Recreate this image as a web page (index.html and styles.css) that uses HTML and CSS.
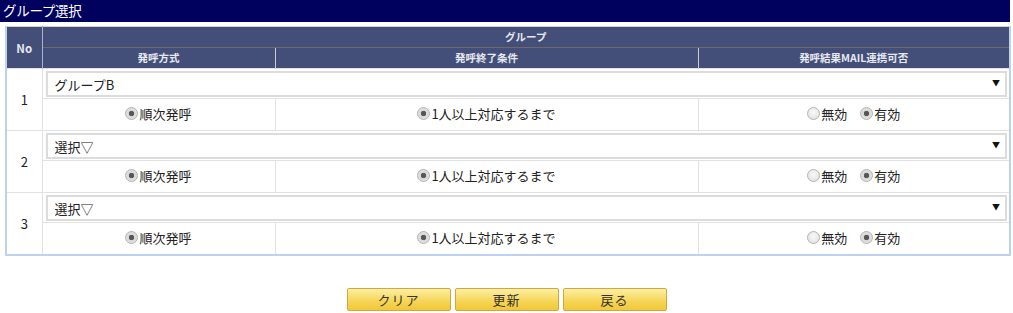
FILE: index.html
```html
<!DOCTYPE html>
<html lang="ja">
<head>
<meta charset="utf-8">
<title>グループ選択</title>
<link rel="stylesheet" href="styles.css">
</head>
<body>
<div class="title">グループ選択</div>
<table class="grid">
  <colgroup>
    <col class="c-no"><col class="c-1"><col class="c-2"><col class="c-3">
  </colgroup>
  <thead>
    <tr class="h1"><th rowspan="2" class="no-h">No</th><th colspan="3">グループ</th></tr>
    <tr class="h2"><th>発呼方式</th><th>発呼終了条件</th><th>発呼結果MAIL連携可否</th></tr>
  </thead>
  <tbody>
    <tr class="sel-row">
      <td rowspan="2" class="no">1</td>
      <td colspan="3"><span class="sel"><select><option>グループB</option></select></span></td>
    </tr>
    <tr class="radio-row">
      <td><label><input type="radio" name="m1" checked>順次発呼</label></td>
      <td><label><input type="radio" name="e1" checked>1人以上対応するまで</label></td>
      <td><label><input type="radio" name="r1">無効</label><label class="gap"><input type="radio" name="r1" checked>有効</label></td>
    </tr>
    <tr class="sel-row">
      <td rowspan="2" class="no">2</td>
      <td colspan="3"><span class="sel"><select><option>選択▽</option></select></span></td>
    </tr>
    <tr class="radio-row">
      <td><label><input type="radio" name="m2" checked>順次発呼</label></td>
      <td><label><input type="radio" name="e2" checked>1人以上対応するまで</label></td>
      <td><label><input type="radio" name="r2">無効</label><label class="gap"><input type="radio" name="r2" checked>有効</label></td>
    </tr>
    <tr class="sel-row">
      <td rowspan="2" class="no">3</td>
      <td colspan="3"><span class="sel"><select><option>選択▽</option></select></span></td>
    </tr>
    <tr class="radio-row last">
      <td><label><input type="radio" name="m3" checked>順次発呼</label></td>
      <td><label><input type="radio" name="e3" checked>1人以上対応するまで</label></td>
      <td><label><input type="radio" name="r3">無効</label><label class="gap"><input type="radio" name="r3" checked>有効</label></td>
    </tr>
  </tbody>
</table>
<div class="buttons">
  <button class="btn">クリア</button>
  <button class="btn">更新</button>
  <button class="btn">戻る</button>
</div>
</body>
</html>
```
FILE: styles.css
```css
html, body {
  margin: 0;
  padding: 0;
  background: #fff;
}
body {
  font-family: "Noto Sans CJK JP", "Noto Sans", sans-serif;
  font-size: 13px;
  line-height: 16px;
  color: #222;
  width: 1013px;
}
.title {
  width: 1010px;
  height: 22px;
  line-height: 21px;
  background: #00005e;
  color: #fff;
  font-size: 13.5px;
  padding-left: 3px;
  box-sizing: border-box;
  letter-spacing: -0.3px;
}
.grid {
  margin: 4px 0 0 5px;
  width: 1006px;
  border-collapse: collapse;
  table-layout: fixed;
  border-top: 1px solid #d6d2c8;
  border-left: 2px solid #bcd2f2;
  border-right: 2px solid #bcd2f2;
  border-bottom: 2px solid #bcd2f2;
}
.c-no { width: 36px; }
.c-1 { width: 233px; }
.c-2 { width: 423px; }
.c-3 { width: auto; }
th {
  background: #434f79;
  color: #e6e8ee;
  font-size: 10.5px;
  font-weight: bold;
  padding: 0;
  height: 20px;
  text-align: center;
}
.h1 th { border-bottom: 1px solid #6f6a66; }
.h1 th.no-h { font-size: 11.5px; border-right: 1px solid #aab0c6; border-bottom: none; }
.h2 th + th { border-left: 1px solid #c9ccd8; }
td {
  padding: 0;
  border: 1px solid #e2e2e2;
  text-align: center;
}
td.no {
  font-size: 13px;
  color: #222;
}
.sel-row td { height: 26px; }
.sel-row td[colspan] { padding: 2px 2px 1px 3px; }
.radio-row td { height: 31px; }
.sel {
  position: relative;
  display: block;
}
.sel select {
  appearance: none;
  -webkit-appearance: none;
  display: block;
  width: 100%;
  height: 26px;
  border: 2px solid #dcdcdc;
  border-radius: 0;
  background: #fff;
  font-family: inherit;
  font-size: 13px;
  color: #222;
  padding: 0 0 0 7px;
  margin: 0;
  outline: none;
}
.sel::after {
  content: "▼";
  position: absolute;
  right: 7px;
  top: 6px;
  font-size: 8px;
  line-height: 12px;
  color: #111;
  pointer-events: none;
}
label {
  display: inline-flex;
  align-items: center;
  white-space: nowrap;
}
label.gap { margin-left: 13px; }
input[type="radio"] {
  appearance: none;
  -webkit-appearance: none;
  width: 13px;
  height: 13px;
  margin: 0 1px 0 0;
  border-radius: 50%;
  border: 1px solid #b4b4b4;
  background: radial-gradient(circle at 50% 40%, #fafafa 0%, #dcdcdc 100%);
  box-sizing: border-box;
}
input[type="radio"]:checked {
  background: radial-gradient(circle, #555 0, #5a5a5a 2.5px, #d8d8d8 3px, #e8e8e8 100%);
}
.buttons {
  display: flex;
  justify-content: center;
  gap: 4px;
  margin-top: 32px;
}
.btn {
  width: 104px;
  height: 23px;
  padding: 0;
  border: 1px solid #d9a43a;
  border-radius: 2px;
  background: linear-gradient(#fdf0a6, #f6d65a 55%, #f0c838);
  font-family: inherit;
  font-size: 13px;
  line-height: 16px;
  color: #333;
  letter-spacing: 1px;
}
```
